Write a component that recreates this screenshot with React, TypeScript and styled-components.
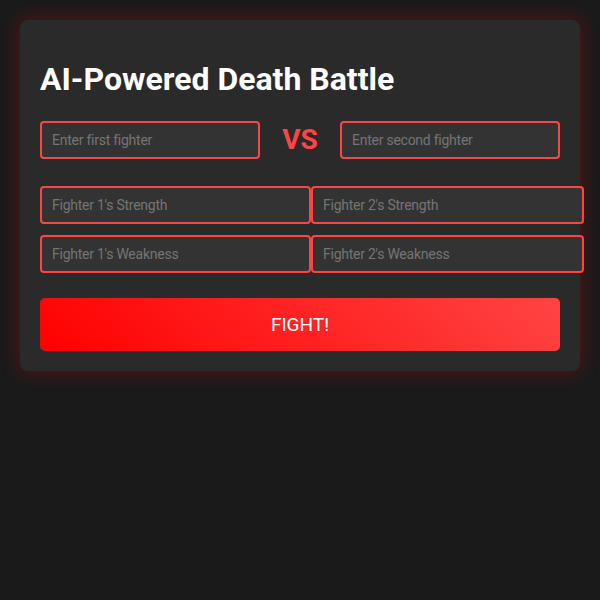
import React from "react";
import styled, { createGlobalStyle } from "styled-components";

const GlobalStyle = createGlobalStyle`
  html, body {
    margin: 0;
    padding: 0;
    background: #1a1a1a;
    font-family: Roboto, "Liberation Sans", sans-serif;
    color: #fff;
  }
  body {
    padding: 20px;
    min-height: 600px;
    box-sizing: border-box;
  }
`;

const Card = styled.div`
  width: 520px;
  padding: 20px;
  background: #2a2a2a;
  border-radius: 8px;
  box-shadow: 0 0 20px rgba(255, 0, 0, 0.3);
`;

const Title = styled.h1`
  font-size: 32px;
  font-weight: 700;
  margin: 21px 0 22px;
  line-height: 37.5px;
`;

const FighterRow = styled.div`
  display: flex;
  align-items: center;
  gap: 20px;
  margin-bottom: 27px;
`;

const Vs = styled.span`
  width: 40px;
  text-align: center;
  font-size: 28px;
  font-weight: 700;
  color: #ff4444;
`;

const Input = styled.input<{ $w?: number }>`
  box-sizing: border-box;
  width: ${({ $w }) => ($w ? `${$w}px` : "100%")};
  height: 38px;
  padding: 0 10px;
  background: #333;
  border: 2px solid #ff4444;
  border-radius: 4px;
  color: #fff;
  font-family: inherit;
  font-size: 14px;
  letter-spacing: -0.25px;
  outline: none;
  &::placeholder {
    color: #757575;
  }
`;

const StatsGrid = styled.div`
  display: grid;
  grid-template-columns: 271px 273px;
  row-gap: 11px;
  margin-bottom: 25px;
`;

const FightButton = styled.button`
  display: block;
  width: 100%;
  height: 53px;
  border: none;
  border-radius: 5px;
  background: linear-gradient(45deg, #ff0000, #ff4444);
  color: #fff;
  font-family: inherit;
  font-size: 19px;
  cursor: pointer;
`;

export default function App() {
  return (
    <>
      <GlobalStyle />
      <Card>
        <Title>AI-Powered Death Battle</Title>
        <FighterRow>
          <Input $w={220} placeholder="Enter first fighter" />
          <Vs>VS</Vs>
          <Input $w={220} placeholder="Enter second fighter" />
        </FighterRow>
        <StatsGrid>
          <Input placeholder="Fighter 1's Strength" />
          <Input placeholder="Fighter 2's Strength" />
          <Input placeholder="Fighter 1's Weakness" />
          <Input placeholder="Fighter 2's Weakness" />
        </StatsGrid>
        <FightButton>FIGHT!</FightButton>
      </Card>
    </>
  );
}
